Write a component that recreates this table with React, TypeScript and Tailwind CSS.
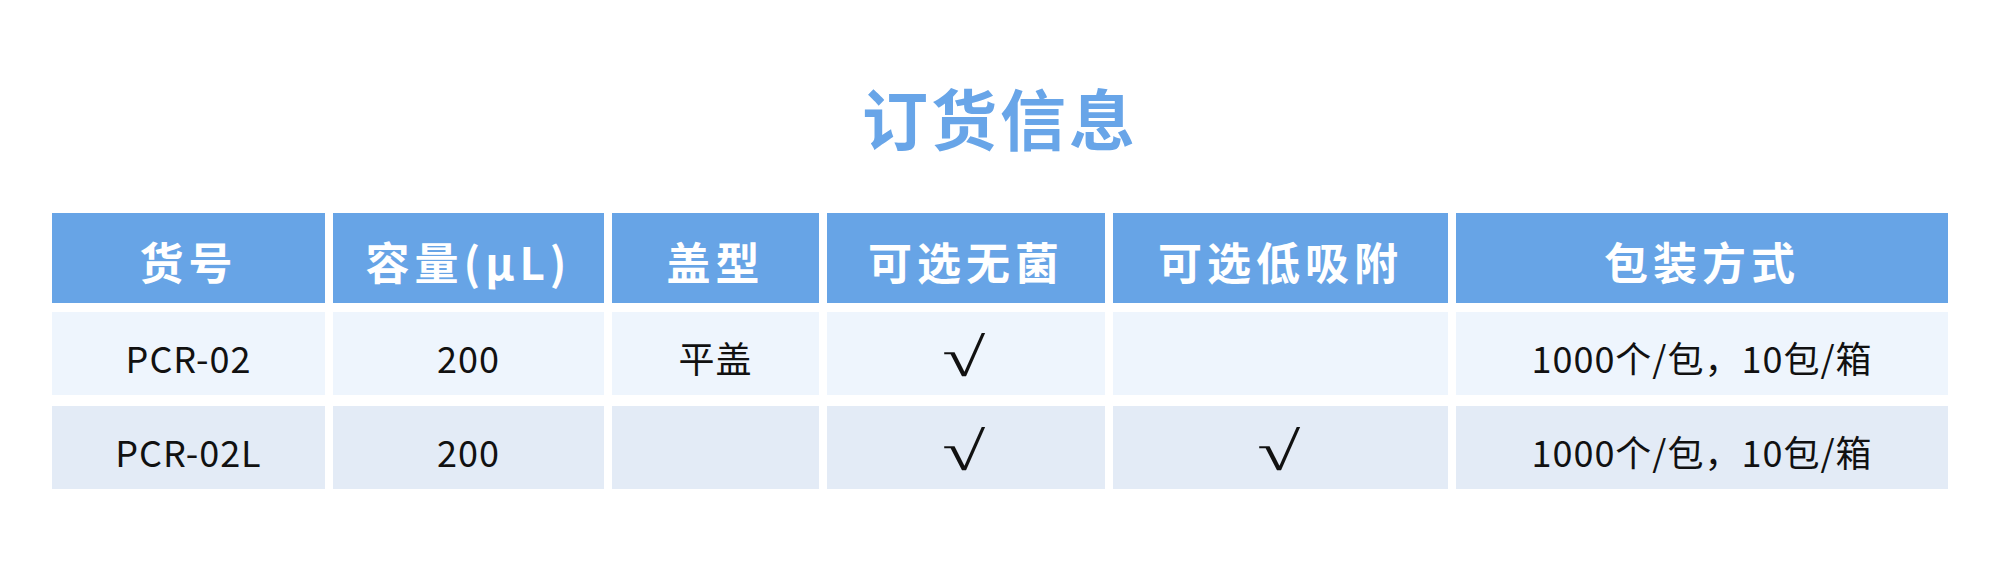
import React from 'react';

const columns = ['货号', '容量(μL)', '盖型', '可选无菌', '可选低吸附', '包装方式'];

const rows = [
  { bg: 'bg-[#eef5fd]', mt: 'mt-[9px]', cells: ['PCR-02', '200', '平盖', '√', '', '1000个/包，10包/箱'] },
  { bg: 'bg-[#e3ebf6]', mt: 'mt-[11px]', cells: ['PCR-02L', '200', '', '√', '√', '1000个/包，10包/箱'] },
];

const gridCols = 'grid grid-cols-[273px_271px_207px_278px_335px_492px] gap-x-2';

const Cell: React.FC<{ value: string; bg: string }> = ({ value, bg }) => {
  if (value === '√') {
    return (
      <div className={`h-[83px] ${bg} flex items-center justify-center pt-[9px] text-[#111]`}>
        <span className="font-['Liberation_Serif',serif] text-[54px] leading-none scale-x-[1.45] -translate-x-[2px]">√</span>
      </div>
    );
  }
  return (
    <div className={`h-[83px] ${bg} flex items-center justify-center pt-[6px] text-[#111] text-[36px] leading-none tracking-[1px]`}>
      {value}
    </div>
  );
};

const App: React.FC = () => {
  return (
    <div className="w-full h-[565px] bg-white font-['Noto_Sans_CJK_SC',sans-serif] px-[52px] pt-[83px]">
      <h1 className="text-center text-[66px] leading-none font-bold text-[#68a5e8] tracking-[3px]">订货信息</h1>
      <div className="mt-[64px]">
        <div className={gridCols}>
          {columns.map((c) => (
            <div key={c} className="h-[90px] bg-[#67a4e6] flex items-center justify-center pt-[5px] text-white text-[44px] font-bold leading-none tracking-[5px]">
              {c}
            </div>
          ))}
        </div>
        {rows.map((row, i) => (
          <div key={i} className={`${gridCols} ${row.mt}`}>
            {row.cells.map((cell, j) => (
              <Cell key={j} value={cell} bg={row.bg} />
            ))}
          </div>
        ))}
      </div>
    </div>
  );
};

export default App;
